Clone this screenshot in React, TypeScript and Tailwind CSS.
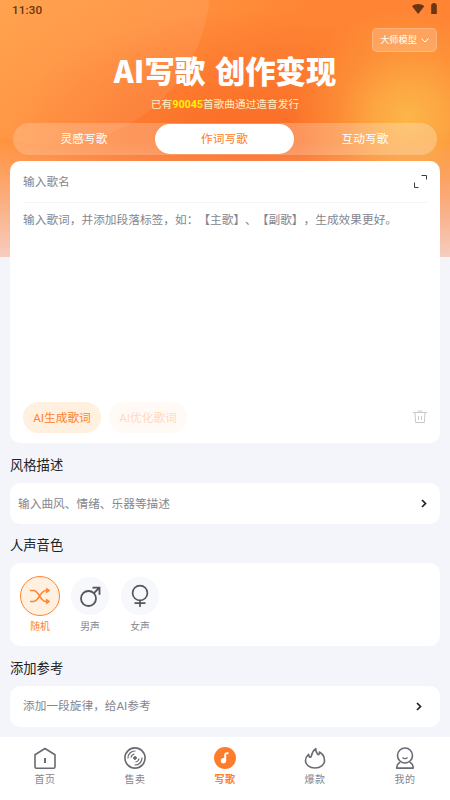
import type { ReactNode } from 'react'

const modes = ['灵感写歌', '作词写歌', '互动写歌']

function ChevronRight() {
  return (
    <svg width="6" height="9" viewBox="0 0 6 9" fill="none" stroke="#222226" strokeWidth="1.7">
      <path d="M1 1 4.500 4.500 1 8" />
    </svg>
  )
}

function ShuffleIcon() {
  return (
    <svg width="22" height="18" viewBox="0 0 22 18" fill="none" stroke="#ff8434" strokeWidth="1.7">
      <path d="M1 3.500h3.500C10 3.500 11 14.500 17 14.500h1M1 14.500h3.500C10 14.500 11 3.500 17 3.500h1" />
      <path d="M17.300 1v5l3.700-2.500zM17.300 12v5l3.700-2.500z" fill="#ff8434" strokeWidth="0.6" />
    </svg>
  )
}

function MaleIcon() {
  return (
    <svg width="21" height="21" viewBox="0 0 21 21" fill="none" stroke="#55565c" strokeWidth="1.8">
      <circle cx="8.500" cy="12.500" r="7.500" />
      <path d="M13.700 7.300 19 2M12.500 1.700h7v7" />
    </svg>
  )
}

function FemaleIcon() {
  return (
    <svg width="18" height="24" viewBox="0 0 18 24" fill="none" stroke="#55565c" strokeWidth="1.7">
      <circle cx="9" cy="9" r="7.400" />
      <path d="M9 16.400V23M3.500 19.200h11" />
    </svg>
  )
}

const voices: { name: string; icon: ReactNode; active?: boolean }[] = [
  { name: '随机', icon: <ShuffleIcon />, active: true },
  { name: '男声', icon: <MaleIcon /> },
  { name: '女声', icon: <FemaleIcon /> },
]

const tabs: { name: string; icon: ReactNode; active?: boolean }[] = [
  {
    name: '首页',
    icon: (
      <>
        <path d="M1 7.800 11 1.500l10 6.300v12a1.400 1.400 0 0 1-1.400 1.400H2.400A1.400 1.400 0 0 1 1 19.800z" />
        <path d="M11 11v5" strokeWidth="2" />
      </>
    ),
  },
  {
    name: '售卖',
    icon: (
      <>
        <circle cx="11" cy="11" r="10.100" />
        <circle cx="11" cy="11" r="1.400" fill="#6a6b71" strokeWidth="1" />
        <path d="M4 11.500A7 7 0 0 1 11.500 4M7 10.500a4.200 4.200 0 0 1 3.500-3.500M18 10.500a7 7 0 0 1-7.500 7.500M15 11.500a4.200 4.200 0 0 1-3.500 3.500" strokeWidth="1.200" />
      </>
    ),
  },
  {
    name: '写歌',
    active: true,
    icon: (
      <>
        <circle cx="11" cy="11" r="11" fill="#ff7d2a" stroke="none" />
        <circle cx="9.400" cy="13.700" r="2.700" fill="#fff" stroke="none" />
        <path d="M11.200 14V8c0-1.600 1.300-2 3.300-1.800" stroke="#fff" strokeWidth="2" />
      </>
    ),
  },
  {
    name: '爆款',
    icon: (
      <path d="M4.600 7.300c.2 2 1 2.900 2 2.900C8 10.200 6.800 5 11.800 1.600c-.2 3 1 4.300 2 5.900.9.800 1.700-.5 1.600-2.500 3.400 1.800 5.100 5.100 5.100 8.400 0 4.600-4.100 7.600-9.500 7.600s-9.500-3-9.500-7.600c0-2.600 1.200-4.200 3.100-6.100z" />
    ),
  },
  {
    name: '我的',
    icon: (
      <>
        <circle cx="11" cy="8.500" r="7.500" />
        <path d="M8.500 10.500c1.300 1.400 3.700 1.400 5 0" strokeWidth="1.300" />
        <path d="M6.300 15.300c-2 .8-3.300 2.700-3.600 5.800h16.600c-.3-3.100-1.600-5-3.600-5.800" />
      </>
    ),
  },
]

function HeroBackground() {
  return (
    <div className="absolute inset-x-0 top-0 -z-10 h-[257px] overflow-hidden bg-[radial-gradient(ellipse_115px_110px_at_408px_118px,#fcb648_0%,#fcb147cc_30%,#fca94266_62%,#fca94200_100%),radial-gradient(ellipse_240px_125px_at_250px_135px,#fa6d28_0%,#fa6d2800_100%),linear-gradient(135deg,#ffa04a_0%,#ff8534_45%,#fd8232_100%)]">
      <div className="absolute -top-[175px] -left-[110px] size-[320px] rounded-full bg-linear-to-r from-white/0 to-white/8" />
      <div className="absolute inset-x-0 bottom-0 h-[115px] bg-linear-to-b from-[#f6cdbf]/0 to-[#f6cdbf]" />
    </div>
  )
}

function Section({ title, children }: { title: string; children: ReactNode }) {
  return (
    <section>
      <h2 className="flex h-[39.500px] items-center pt-[6px] text-[13.300px] text-[#202124]">{title}</h2>
      {children}
    </section>
  )
}

export default function App() {
  return (
    <div className="relative isolate flex h-[800px] w-[450px] flex-col overflow-hidden bg-[#f4f5fa] font-['Roboto','Noto_Sans_CJK_SC',sans-serif] text-[11.700px] text-[#85868f] [text-spacing-trim:space-all]">
      <HeroBackground />

      <header className="h-[161px]">
        <div className="flex h-[28px] items-start justify-between pt-[3px] pr-3 pl-3 text-[#693512]">
          <span className="text-[11.700px] leading-[15px] font-medium tracking-[0.100px]">11:30</span>
          <svg width="26" height="12" viewBox="0 0 26 12" fill="#693512">
            <path d="M0 3.200C3.500.300 8.800.300 12.300 3.200L6.150 11z" />
            <path d="M20.500 1.300V0h3v1.300h1.300V11h-5.600V1.300z" />
          </svg>
        </div>
        <div className="flex justify-end pr-[13px]">
          <button className="flex h-6 w-[65px] items-center justify-center gap-1 rounded-[5px] border border-white/20 bg-white/20 text-[9.200px] whitespace-nowrap text-white">
            大师模型
            <svg width="8" height="5" viewBox="0 0 8 5" fill="none" stroke="#fff">
              <path d="m.5.5 3.500 3.500L7.500.5" />
            </svg>
          </button>
        </div>
        <h1 className="flex h-[39px] items-center justify-center gap-[10px] pb-[2px] font-['Noto_Sans_CJK_SC',sans-serif] text-[30.300px] leading-none font-black text-white">
          <span>AI写歌</span>
          <span>创作变现</span>
        </h1>
        <p className="flex h-[32px] items-center justify-center pb-[4px] text-[10.700px] text-[#fff0c4]">
          已有<b className="font-bold text-[#fff000]">90045</b>首歌曲通过造音发行
        </p>
        <div className="mx-[13px] flex h-8 items-center rounded-full bg-linear-to-r from-white/20 to-white/25 text-white">
          {modes.map((m, i) => (
            <button
              key={m}
              className={i === 1 ? 'h-[30px] w-[139px] rounded-full bg-white pt-[2px] text-[#ff7d2a]' : 'h-[30px] w-[142px] pt-[2px] text-center'}
            >
              {m}
            </button>
          ))}
        </div>
      </header>

      <main className="flex-1 px-[10px]">
        <div className="flex h-[282px] flex-col rounded-[10px] bg-white px-[13px]">
          <div className="flex h-[42px] items-center justify-between border-b border-[#f4f4f5]">
            <span className="pt-[2px]">输入歌名</span>
            <svg width="13" height="13" viewBox="0 0 13 13" fill="none" stroke="#3c3d42" strokeWidth="1" className="-mt-[1px]">
              <path d="M7.500.5h5v4M.5 7.500v5h4" />
            </svg>
          </div>
          <p className="flex-1 pt-[9px] leading-[17px] whitespace-nowrap">输入歌词，并添加段落标签，如：【主歌】、【副歌】，生成效果更好。</p>
          <div className="flex h-[41px] items-start gap-[8px] text-[#ff812f]">
            <button className="h-[31px] w-[78px] rounded-full bg-[#fff0df] pt-[3px]">AI生成歌词</button>
            <button className="h-[31px] w-[78px] rounded-full bg-[#fff0df] pt-[3px] opacity-30">AI优化歌词</button>
            <svg width="14" height="14" viewBox="0 0 14 14" fill="none" stroke="#c9c9cc" className="mt-[8px] ml-auto">
              <path d="M0 2.500h14M4.500 1h5M2 3l.7 9.500h8.600L12 3M5.500 6v4M8.500 6v4" />
            </svg>
          </div>
        </div>

        <Section title="风格描述">
          <div className="flex h-[41px] items-center justify-between rounded-[10px] bg-white pr-[13px] pl-2">
            <span className="pt-[3px]">输入曲风、情绪、乐器等描述</span>
            <ChevronRight />
          </div>
        </Section>

        <Section title="人声音色">
          <div className="flex h-[83px] gap-[10px] rounded-[10px] bg-white px-[10px] pt-[13px]">
            {voices.map(v => (
              <div key={v.name} className="flex w-10 flex-col items-center">
                <div
                  className={
                    v.active
                      ? 'flex size-10 items-center justify-center rounded-full border border-[#ff8434] bg-[#fff0df]'
                      : 'flex size-10 items-center justify-center rounded-full border border-white bg-[#f7f8fc]'
                  }
                >
                  {v.icon}
                </div>
                <span className={v.active ? 'mt-[4px] text-[9.800px] leading-[14px] text-[#ff7d2a]' : 'mt-[4px] text-[9.800px] leading-[14px]'}>
                  {v.name}
                </span>
              </div>
            ))}
          </div>
        </Section>

        <Section title="添加参考">
          <div className="flex h-[41.500px] items-center justify-between rounded-[10px] bg-white pr-[18px] pl-[13px]">
            <span className="pt-[2px]">添加一段旋律，给AI参考</span>
            <ChevronRight />
          </div>
        </Section>
      </main>

      <nav className="flex h-[63px] bg-white pt-[10px]">
        {tabs.map(t => (
          <a key={t.name} className="flex w-[90px] flex-col items-center">
            <svg width="22" height="22" viewBox="0 0 22 22" fill="none" stroke="#6a6b71" strokeWidth="1.6" strokeLinejoin="round">
              {t.icon}
            </svg>
            <span
              className={
                t.active
                  ? 'mt-[4px] text-[10px] leading-[14px] font-bold tracking-[0.500px] text-[#ff7d2a]'
                  : 'mt-[4px] text-[10px] leading-[14px] tracking-[0.500px]'
              }
            >
              {t.name}
            </span>
          </a>
        ))}
      </nav>
    </div>
  )
}
